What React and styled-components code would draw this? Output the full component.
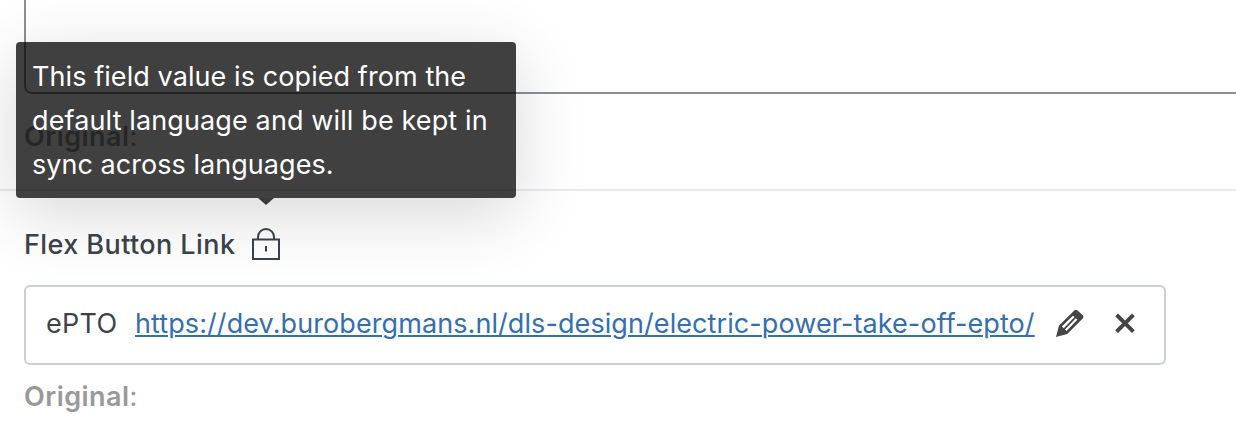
import React from 'react';
import styled, { createGlobalStyle } from 'styled-components';

const GlobalStyle = createGlobalStyle`
  * {
    box-sizing: border-box;
  }

  body {
    margin: 0;
    background: #fff;
    color: #3c434a;
    font-family: Inter, 'Liberation Sans', sans-serif;
    font-size: 27px;
    overflow: hidden;
  }
`;

const Page = styled.div`
  width: 1236px;
  height: 446px;
  overflow: hidden;
`;

const Field = styled.section`
  padding: ${({ $first }) => ($first ? '0 0 0 24px' : '32px 24px 0')};
  height: ${({ $first }) => ($first ? '191px' : 'auto')};
  border-bottom: ${({ $first }) => ($first ? '2px solid #e9e9ed' : 'none')};
`;

const TextArea = styled.div`
  width: 1240px;
  height: 94px;
  border: 2px solid #8c8f94;
  border-top: 0;
  border-radius: 0 0 8px 8px;
`;

const Original = styled.p`
  margin: ${({ $top }) => $top}px 0 0;
  line-height: 36px;
  font-weight: 600;
  letter-spacing: 0.45px;
  color: #999;

  span {
    font-weight: 400;
  }
`;

const LabelRow = styled.div`
  display: flex;
  align-items: center;
  height: 44px;
`;

const Label = styled.label`
  width: 227px;
  font-weight: 500;
  letter-spacing: 0.42px;
  line-height: 36px;
  white-space: nowrap;
`;

const LockAnchor = styled.span`
  position: relative;
  display: block;
  width: 30px;
  height: 34px;
`;

const Tooltip = styled.div`
  position: absolute;
  left: 50%;
  bottom: 100%;
  width: 500px;
  height: 156px;
  margin: 0 0 30px -250px;
  padding: 13px 16px 11px;
  border-radius: 4px;
  background: rgba(0, 0, 0, 0.75);
  box-shadow: 0 16px 68px rgba(0, 0, 0, 0.16);
  color: #fff;
  line-height: 44px;
  white-space: nowrap;

  &::after {
    content: '';
    position: absolute;
    top: 100%;
    left: 50%;
    margin-left: -8px;
    border: 8px solid transparent;
    border-top: 7px solid rgba(0, 0, 0, 0.75);
    border-bottom: 0;
  }
`;

const TooltipLine = styled.span`
  display: block;
  letter-spacing: ${({ $spacing }) => $spacing || 0}px;
`;

const LinkBox = styled.div`
  display: flex;
  align-items: center;
  width: 1142px;
  height: 80px;
  margin-top: 18px;
  padding: 0 26px 4px 20px;
  border: 2px solid #ccd0d4;
  border-radius: 6px;
  background: #fff;
`;

const LinkTitle = styled.span`
  width: 89px;
  flex-shrink: 0;
  letter-spacing: 0.3px;
`;

const Link = styled.a`
  width: 900px;
  flex-shrink: 0;
  color: #346fb0;
  letter-spacing: 0.085px;
  text-decoration: underline;
  text-decoration-thickness: 2px;
  text-underline-offset: 2px;
  white-space: nowrap;
`;

const IconButton = styled.button`
  display: block;
  flex-shrink: 0;
  width: 30px;
  height: 30px;
  margin-left: ${({ $gap }) => $gap}px;
  padding: 0;
  border: 0;
  background: none;
  color: #444;

  svg {
    display: block;
  }
`;

const LockIcon = () => (
  <svg width="30" height="34" viewBox="0 0 30 34" fill="none" stroke="#3c434a" strokeWidth="2">
    <path d="M7 11.5V9a8 8 0 0 1 16 0V11.5" />
    <path d="M2 11.5H28V31H2Z" />
    <path d="M15 18v5.5" />
  </svg>
);

const PencilIcon = () => (
  <svg width="30" height="30" viewBox="0 0 30 30">
    <path
      fill="currentColor"
      fillRule="evenodd"
      d="M1 29 4 17.5 19.6 2.3q1.3-1.2 2.7 0L28 7.6q1 1.3 0 2.6L12.2 26ZM6.8 18.6 17.8 7.8 19.6 9.1 8.8 20.2ZM10 21.4 20.8 10.2 22.4 11.7 11.5 23Z"
    />
  </svg>
);

const CrossIcon = () => (
  <svg width="30" height="30" viewBox="0 0 30 30" stroke="currentColor" strokeWidth="4">
    <path d="M6.6 6.8 23.4 23.6M23.4 6.8 6.6 23.6" />
  </svg>
);

const App = () => (
  <>
    <GlobalStyle />
    <Page>
      <Field $first>
        <TextArea />
        <Original $top={25}>
          Original<span>:</span>
        </Original>
      </Field>
      <Field>
        <LabelRow>
          <Label>Flex Button Link</Label>
          <LockAnchor>
            <LockIcon />
            <Tooltip role="tooltip">
              <TooltipLine $spacing={0.08}>This field value is copied from the</TooltipLine>
              <TooltipLine $spacing={0.12}>default language and will be kept in</TooltipLine>
              <TooltipLine $spacing={0.04}>sync across languages.</TooltipLine>
            </Tooltip>
          </LockAnchor>
        </LabelRow>
        <LinkBox>
          <LinkTitle>ePTO</LinkTitle>
          <Link>https://dev.burobergmans.nl/dls-design/electric-power-take-off-epto/</Link>
          <IconButton $gap={20} aria-label="Edit">
            <PencilIcon />
          </IconButton>
          <IconButton $gap={25} aria-label="Remove">
            <CrossIcon />
          </IconButton>
        </LinkBox>
        <Original $top={14}>
          Original<span>:</span>
        </Original>
      </Field>
    </Page>
  </>
);

export default App;
